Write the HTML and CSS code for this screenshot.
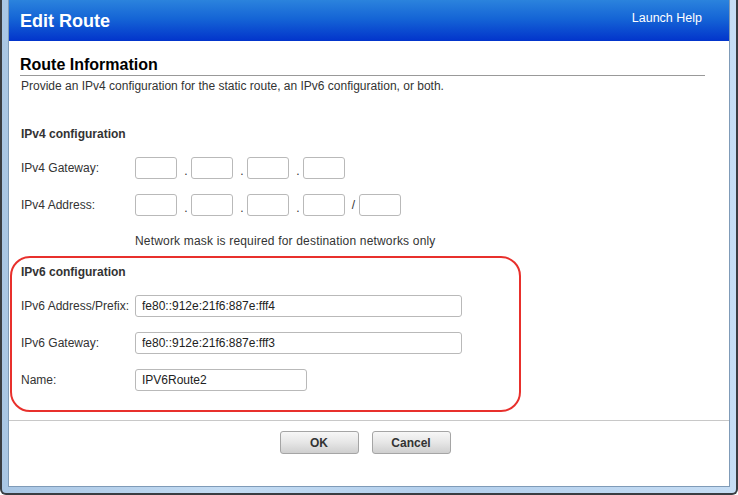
FILE: index.html
```html
<!DOCTYPE html>
<html lang="en">
<head>
    <meta charset="UTF-8">
    <title>Edit Route</title>
    <link rel="stylesheet" href="styles.css">
</head>
<body>
    <div class="window">
        <div class="dialog">
            <div class="header">
                <h1>Edit Route</h1>
                <a href="#" class="help">Launch Help</a>
            </div>

            <div class="content">
                <h2>Route Information</h2>
                <p class="desc">Provide an IPv4 configuration for the static route, an IPv6 configuration, or both.</p>

                <div class="group-title ipv4-title">IPv4 configuration</div>
                <div class="row first">
                    <label>IPv4 Gateway:</label>
                    <input type="text" class="octet">
                    <span class="dot">.</span>
                    <input type="text" class="octet">
                    <span class="dot">.</span>
                    <input type="text" class="octet">
                    <span class="dot">.</span>
                    <input type="text" class="octet">
                </div>
                <div class="row">
                    <label>IPv4 Address:</label>
                    <input type="text" class="octet">
                    <span class="dot">.</span>
                    <input type="text" class="octet">
                    <span class="dot">.</span>
                    <input type="text" class="octet">
                    <span class="dot">.</span>
                    <input type="text" class="octet">
                    <span class="slash">/</span>
                    <input type="text" class="octet">
                </div>
                <div class="note">Network mask is required for destination networks only</div>

                <!-- highlighted section -->
                <div class="ipv6-box">
                    <div class="group-title">IPv6 configuration</div>
                    <div class="row first">
                        <label>IPv6 Address/Prefix:</label>
                        <input type="text" class="wide" value="fe80::912e:21f6:887e:fff4">
                    </div>
                    <div class="row">
                        <label>IPv6 Gateway:</label>
                        <input type="text" class="wide" value="fe80::912e:21f6:887e:fff3">
                    </div>
                    <div class="row">
                        <label>Name:</label>
                        <input type="text" class="medium" value="IPV6Route2">
                    </div>
                </div>
            </div>

            <div class="footer">
                <button>OK</button>
                <button>Cancel</button>
            </div>
        </div>
    </div>
</body>
</html>
```

FILE: styles.css
```css
body {
    margin: 0;
    padding: 0;
    font-family: "Liberation Sans", Arial, sans-serif;
    background-color: #ffffff;
}
.window {
    width: 738px;
    height: 495px;
    box-sizing: border-box;
    border: 2px solid #3a3d42;
    border-top: none;
    border-radius: 0 0 6px 6px;
    padding: 0 6px 6px 6px;
    background: linear-gradient(to right, #a9c6e4, #c4dcf3 30%, #b3cfec 60%, #c6ddf4);
}
.dialog {
    height: 100%;
    box-sizing: border-box;
    border: 1px solid #7f9bb8;
    border-top: none;
    background-color: white;
    display: flex;
    flex-direction: column;
}
.header {
    height: 41px;
    display: flex;
    justify-content: space-between;
    background: linear-gradient(#2b83dd, #1565d6 45%, #0234cb);
    color: white;
}
.header h1 {
    margin: 0;
    padding: 11px 0 0 11px;
    font-size: 18px;
    line-height: 20px;
    font-weight: bold;
}
.help {
    color: white;
    text-decoration: none;
    font-size: 12.5px;
    padding: 11px 27px 0 0;
}
.content {
    flex: 1;
    padding: 14px 24px 0 12px;
    color: #333;
    font-size: 12px;
}
h2 {
    margin: 0 0 0 -1px;
    padding-bottom: 0;
    font-size: 16px;
    line-height: 20px;
    color: #000;
    border-bottom: 1px solid #999;
}
.desc {
    margin: 3px 0 0 0;
    line-height: 14px;
}
.group-title {
    font-weight: bold;
    line-height: 14px;
}
.ipv4-title {
    margin-top: 34px;
}
.row {
    display: flex;
    align-items: center;
    height: 22px;
    margin-top: 15px;
}
.row.first {
    margin-top: 16px;
}
.row label {
    width: 114px;
    line-height: 14px;
}
input {
    height: 22px;
    box-sizing: border-box;
    border: 1px solid #b9b9b9;
    border-radius: 3px;
    padding: 0 6px;
    font-family: "Liberation Sans", Arial, sans-serif;
    font-size: 12px;
    color: #222;
    margin: 0;
}
.octet {
    width: 42px;
}
.wide {
    width: 327px;
}
.medium {
    width: 172px;
}
.dot, .slash {
    width: 14px;
    box-sizing: border-box;
    text-align: center;
    padding-left: 4px;
    padding-top: 6px;
}
.slash {
    padding-left: 3px;
    padding-top: 0;
}
.note {
    margin: 18px 0 0 114px;
    line-height: 14px;
    letter-spacing: 0.18px;
}
.ipv6-box {
    width: 511px;
    box-sizing: border-box;
    margin: 8px 0 0 -11px;
    padding: 7px 0 19px 9px;
    border: 2px solid #e8302c;
    border-radius: 20px;
}
.footer {
    height: 66px;
    box-sizing: border-box;
    border-top: 1px solid #c8c8c8;
    padding: 10px 8px 0 0;
    display: flex;
    justify-content: center;
    gap: 13px;
}
button {
    width: 79px;
    height: 23px;
    border: 1px solid #a5a5a5;
    border-radius: 3px;
    background: linear-gradient(#f7f7f7, #e6e6e6 50%, #cfcfcf);
    font-family: "Liberation Sans", Arial, sans-serif;
    font-size: 12px;
    font-weight: bold;
    color: #333;
    cursor: pointer;
}
```
